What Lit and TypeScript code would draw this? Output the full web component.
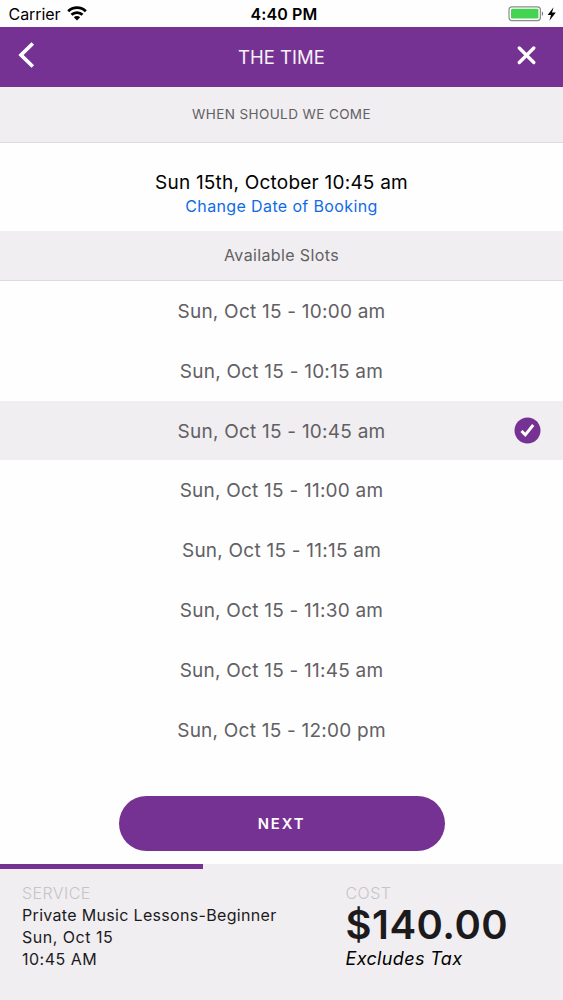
import { LitElement, html, css } from "lit";
import { customElement, property } from "lit/decorators.js";
import { classMap } from "lit/directives/class-map.js";

@customElement("status-bar")
class StatusBar extends LitElement {
  static styles = css`
    :host { display: grid; grid-template-columns: 1fr auto 1fr; height: 27px; background: #fefefe; color: #000; line-height: 28px; font-size: 16px; }
    .left { display: flex; align-items: flex-start; padding-left: 8.5px; }
    .carrier { letter-spacing: -0.05px; }
    .wifi { margin: 6px 0 0 6.5px; }
    .clock { font-weight: 600; letter-spacing: 0.1px; padding-left: 5px; }
    .right { display: flex; justify-content: flex-end; padding: 5px 6px 0 0; }
  `;
  render() {
    return html`
      <div class="left">
        <span class="carrier">Carrier</span>
        <svg class="wifi" width="20" height="15" viewBox="0 0 20 15">
          <g fill="none" stroke="#000" stroke-width="2.8">
            <path d="M1.2 5.3a12.4 12.4 0 0 1 17.6 0"/>
            <path d="M4.5 8.8a7.8 7.8 0 0 1 11 0"/>
          </g>
          <path d="M6.8 11.3a4.6 4.6 0 0 1 6.4 0L10 14.6z"/>
        </svg>
      </div>
      <span class="clock">4:40 PM</span>
      <div class="right">
        <svg width="50" height="18" viewBox="0 0 50 18">
          <rect x="2" y="1.8" width="31.4" height="13.8" rx="3" fill="#fff" stroke="#8c8c8c" stroke-width="1.2"/>
          <rect x="4" y="3.8" width="27.4" height="9.8" rx="1.4" fill="#43d551"/>
          <path d="M34.9 6.6c1.6.7 1.6 3.6 0 4.3z" fill="#777"/>
          <path d="M46.6 2.2 40.6 10h3.4l-1.6 5.800 6.400-8.400h-3.800z"/>
        </svg>
      </div>`;
  }
}

@customElement("nav-header")
class NavHeader extends LitElement {
  static styles = css`
    :host { display: grid; grid-template-columns: 1fr auto 1fr; align-items: center; height: 60px; padding: 0 26px 0 18px; box-sizing: border-box; background: #763292; color: #fff; }
    .icon { display: block; margin-top: -4px; }
    .close { justify-self: end; }
    .title { font-size: 18.5px; letter-spacing: 0; padding-left: 8px; opacity: 0.95; }
  `;
  render() {
    return html`
      <svg class="icon" width="18" height="28" viewBox="0 0 18 28" fill="none" stroke="#fff" stroke-width="3.7"><path d="M14.8 2.5 3 14l11.8 11.5"/></svg>
      <span class="title">THE TIME</span>
      <svg class="icon close" width="20" height="20" viewBox="0 0 20 20" fill="none" stroke="#fff" stroke-width="3.3" stroke-linecap="round"><path d="m2.300 3 14.500 14.500M16.800 3 2.300 17.500"/></svg>`;
  }
}

@customElement("slot-row")
class SlotRow extends LitElement {
  @property() label = "";
  @property({ type: Boolean }) selected = false;
  static styles = css`
    .row { display: grid; grid-template-columns: 1fr auto 1fr; align-items: center; height: 59.8px; padding: 0 22px; color: #626064; }
    .selected { background: #f0eef0; }
    .label { grid-column: 2; font-size: 19px; letter-spacing: 0.23px; padding-top: 1.4px; }
    .check { justify-self: end; display: block; }
  `;
  render() {
    return html`
      <div class=${classMap({ row: true, selected: this.selected })}>
        <span class="label">${this.label}</span>
        ${this.selected
          ? html`<svg class="check" width="27" height="27" viewBox="0 0 27 27"><circle cx="13.5" cy="13.5" r="13" fill="#763292"/><path d="m7.5 14 3.800 3.800 7.900-9.800" fill="none" stroke="#fff" stroke-width="2.900"/></svg>`
          : null}
      </div>`;
  }
}

@customElement("booking-footer")
class BookingFooter extends LitElement {
  @property({ type: Number }) progress = 0;
  static styles = css`
    :host { display: block; height: 136px; background: #f0eef0; color: #1c1a1d; }
    .bar { height: 5px; background: #763292; }
    .cols { display: grid; grid-template-columns: 323.5px 1fr; padding: 13px 0 0 22px; }
    .line { font-size: 16px; line-height: 22px; white-space: nowrap; }
    .cap { color: #c6c4c7; font-weight: 300; letter-spacing: 0.45px; }
    .service { letter-spacing: 0.32px; }
    .short { letter-spacing: 0.5px; }
    .price { font-size: 40px; line-height: 42px; font-weight: 600; letter-spacing: 0.5px; }
    .tax { font-size: 18px; line-height: 26px; font-style: italic; color: #000; letter-spacing: 0.35px; }
  `;
  render() {
    return html`
      <div class="bar" style="width:${this.progress}%"></div>
      <div class="cols">
        <div>
          <div class="line cap">SERVICE</div>
          <div class="line service">Private Music Lessons-Beginner</div>
          <div class="line short">Sun, Oct 15</div>
          <div class="line short">10:45 AM</div>
        </div>
        <div>
          <div class="line cap">COST</div>
          <div class="price">$140.00</div>
          <div class="tax">Excludes Tax</div>
        </div>
      </div>`;
  }
}

const SLOTS = ["10:00 am", "10:15 am", "10:45 am", "11:00 am", "11:15 am", "11:30 am", "11:45 am", "12:00 pm"];

@customElement("app-root")
class AppRoot extends LitElement {
  static styles = css`
    :host { display: flex; flex-direction: column; height: 1000px; background: #fefefe; font-family: Inter, "Liberation Sans", sans-serif; overflow: hidden; }
    .band { display: flex; align-items: center; justify-content: center; box-sizing: border-box; background: #f0eef0; border-bottom: 1px solid #dddbde; color: #626064; padding-bottom: 2px; }
    .question { height: 56px; font-size: 13.5px; letter-spacing: 0.4px; }
    .available { height: 50px; font-size: 16px; letter-spacing: 0.37px; }
    .date { height: 88px; box-sizing: border-box; padding-top: 27px; text-align: center; color: #000; }
    .when { font-size: 19px; line-height: 26px; letter-spacing: 0.22px; }
    .change { font-size: 16px; line-height: 20px; letter-spacing: 0.37px; color: #0f6ce6; }
    .action { flex: 1; display: flex; align-items: flex-end; justify-content: center; padding-bottom: 13.5px; }
    .next { width: 326px; height: 54.5px; border: 0; border-radius: 28px; padding: 2px 0 0; background: #763292; color: #fff; font: 600 14.8px Inter, sans-serif; letter-spacing: 1.9px; }
  `;
  render() {
    return html`
      <status-bar></status-bar>
      <nav-header></nav-header>
      <div class="band question">WHEN SHOULD WE COME</div>
      <div class="date">
        <div class="when">Sun 15th, October 10:45 am</div>
        <div class="change">Change Date of Booking</div>
      </div>
      <div class="band available">Available Slots</div>
      <div>${SLOTS.map((t) => html`<slot-row label=${"Sun, Oct 15 - " + t} ?selected=${t === "10:45 am"}></slot-row>`)}</div>
      <div class="action"><button class="next">NEXT</button></div>
      <booking-footer progress="36"></booking-footer>`;
  }
}
